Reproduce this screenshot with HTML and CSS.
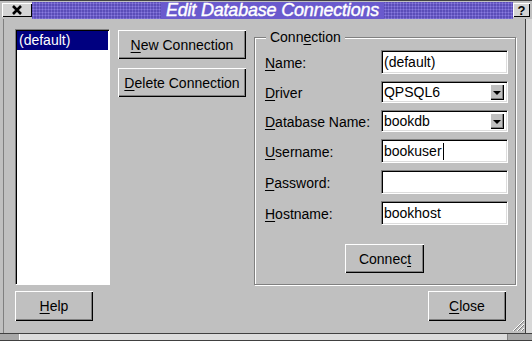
FILE: index.html
```html
<!DOCTYPE html>
<html>
  <head>
    <title>Edit Database Connections</title>
    <link rel="stylesheet" href="styles.css">
  </head>
  <body>
    <div class="window">
      <div class="titlebar">
        <div class="tb-btn tb-close">
          <svg width="12" height="10" viewBox="0 0 12 10"><path d="M2 1 L10 9 M10 1 L2 9" stroke="#000" stroke-width="2.6"/></svg>
        </div>
        <div class="tb-dots"></div>
        <div class="tb-title">Edit Database Connections</div>
        <div class="tb-dots"></div>
        <div class="tb-btn tb-help">?</div>
      </div>

      <div class="frame">
        <div class="main">
          <div class="listbox">
            <div class="list-item selected">(default)</div>
          </div>

          <div class="actions">
            <div class="btn btn-wide"><u>N</u>ew Connection</div>
            <div class="btn btn-wide"><u>D</u>elete Connection</div>
          </div>

          <fieldset class="group">
            <legend>Conn<u>e</u>ction</legend>
            <div class="form">
              <div class="lbl"><u>N</u>ame:</div>
              <div class="field">(default)</div>

              <div class="lbl"><u>D</u>river</div>
              <div class="field combo">QPSQL6<span class="arrow"></span></div>

              <div class="lbl"><u>D</u>atabase Name:</div>
              <div class="field combo">bookdb<span class="arrow"></span></div>

              <div class="lbl"><u>U</u>sername:</div>
              <div class="field">bookuser<span class="caret"></span></div>

              <div class="lbl"><u>P</u>assword:</div>
              <div class="field"></div>

              <div class="lbl"><u>H</u>ostname:</div>
              <div class="field">bookhost</div>
            </div>
            <div class="connect-row">
              <div class="btn btn-connect">Connec<u>t</u></div>
            </div>
          </fieldset>
        </div>

        <div class="footer">
          <div class="btn btn-foot"><u>H</u>elp</div>
          <div class="btn btn-foot"><u>C</u>lose</div>
        </div>
        <svg class="grip" width="13" height="13" viewBox="0 0 13 13">
          <path d="M12 1 L1 12 M12 5 L5 12 M12 9 L9 12" stroke="#fff" stroke-width="1"/>
          <path d="M12 2 L2 12 M12 6 L6 12 M12 10 L10 12" stroke="#808080" stroke-width="1"/>
        </svg>
      </div>

      <div class="statusbar">
        <div class="sb-left"></div>
        <div class="sb-mid"></div>
        <div class="sb-right"></div>
      </div>
    </div>
  </body>
</html>
```

FILE: styles.css
```css
* {
  box-sizing: border-box;
  margin: 0;
  padding: 0;
}

body {
  background: #c0c0c0;
  font-family: "Liberation Sans", Arial, sans-serif;
  font-size: 14px;
  color: #000;
}

u {
  text-decoration: underline;
  text-underline-offset: 2px;
}

.window {
  width: 532px;
  height: 341px;
  display: flex;
  flex-direction: column;
  background: #c0c0c0;
}

/* title bar */
.titlebar {
  height: 19px;
  display: flex;
  align-items: center;
  background: #c0c0c0;
  border-top: 1px solid #404040;
  padding: 0 2px 0 2px;
}

.tb-btn {
  height: 14px;
  background: #d4d4d4;
  box-shadow: inset 1px 1px #fff, inset -1px -1px #000;
  display: flex;
  align-items: center;
  justify-content: center;
}

.tb-close {
  width: 30px;
}

.tb-help {
  width: 17px;
  font-weight: bold;
  font-size: 13px;
}

.tb-dots {
  flex: 1;
  align-self: stretch;
  margin: 1px 0 0;
  background-color: #5b4db8;
  background-image: radial-gradient(circle, #8a7be0 0.9px, transparent 1.1px);
  background-size: 3px 3px;
}

.tb-title {
  align-self: stretch;
  margin-top: 1px;
  background: #6a5acd;
  color: #fff;
  font-style: italic;
  font-size: 18px;
  line-height: 17px;
  padding: 0 5px;
  letter-spacing: -0.2px;
  -webkit-text-stroke: 0.4px #fff;
}

/* frame */
.frame {
  position: relative;
  flex: 1;
  display: flex;
  flex-direction: column;
  border-left: 3px solid #c0c0c0;
  border-right: 6px solid #d8d8d8;
  box-shadow: inset 1px 0 #808080, inset -1px 0 #404040;
  padding: 10px 10px 11px 12px;
}

.main {
  display: flex;
  height: 256px;
}

.listbox {
  width: 96px;
  background: #fff;
  border: 1px solid #808080;
  border-right-color: #fff;
  border-bottom-color: #fff;
  box-shadow: inset 1px 1px #000;
  padding: 1px 1px 0 1px;
}

.list-item {
  height: 19px;
  line-height: 18px;
  padding-left: 2px;
}

.selected {
  background: #000080;
  color: #fff;
}

.actions {
  display: flex;
  flex-direction: column;
  gap: 9px;
  margin: 1px 8px 0 8px;
}

.btn {
  background: #c0c0c0;
  box-shadow: inset 1px 1px #fff, inset -1px -1px #000, inset -2px -2px #808080;
  display: flex;
  align-items: center;
  justify-content: center;
  white-space: nowrap;
}

.btn-wide {
  width: 128px;
  height: 29px;
}

/* group box */
.group {
  width: 265px;
  min-width: 0;
  border: 1px solid #808080;
  box-shadow: 1px 1px #fff, inset 1px 1px #fff;
  padding: 0 0 0 0;
}

.group legend {
  margin-left: 11px;
  padding: 0 4px;
  line-height: 17px;
  background: #c0c0c0;
}

.form {
  display: grid;
  grid-template-columns: 116px 127px;
  grid-template-rows: 24px 22px 22px 24px 24px 24px;
  row-gap: 7px;
  padding: 4px 0 0 10px;
}

.lbl {
  display: flex;
  align-items: center;
  padding-top: 2px;
}

.field {
  position: relative;
  background: #fff;
  border: 1px solid #808080;
  border-right-color: #fff;
  border-bottom-color: #fff;
  box-shadow: inset 1px 1px #000, inset -1px -1px #dcdcdc;
  padding-left: 2px;
  display: flex;
  align-items: center;
  white-space: nowrap;
}

.combo {
  padding-right: 18px;
}

.arrow {
  position: absolute;
  right: 3px;
  top: 2px;
  bottom: 2px;
  width: 14px;
  background: #c0c0c0;
  box-shadow: inset 1px 1px #fff, inset -1px -1px #000, inset -2px -2px #808080;
}

.arrow::after {
  content: "";
  position: absolute;
  left: 3px;
  top: 7px;
  border-left: 4px solid transparent;
  border-right: 4px solid transparent;
  border-top: 4px solid #000;
}

.caret {
  display: inline-block;
  width: 1px;
  height: 17px;
  background: #000;
  margin-left: 1px;
}

.connect-row {
  display: flex;
  justify-content: center;
  margin-top: 19px;
}

.btn-connect {
  width: 79px;
  height: 29px;
}

/* footer */
.footer {
  display: flex;
  justify-content: space-between;
  margin-top: 6px;
  padding-right: 10px;
}

.btn-foot {
  width: 78px;
  height: 30px;
}

.grip {
  position: absolute;
  right: 1px;
  bottom: 1px;
}

/* bottom strip */
.statusbar {
  height: 8px;
  display: flex;
  border-top: 1px solid #404040;
  border-bottom: 1px solid #404040;
}

.sb-left {
  width: 20px;
  background: #a8a8a8;
  border-right: 1px solid #fff;
}

.sb-mid {
  flex: 1;
  background: #dcdcdc;
  border-right: 1px solid #808080;
}

.sb-right {
  width: 24px;
  background: #a8a8a8;
}
```
